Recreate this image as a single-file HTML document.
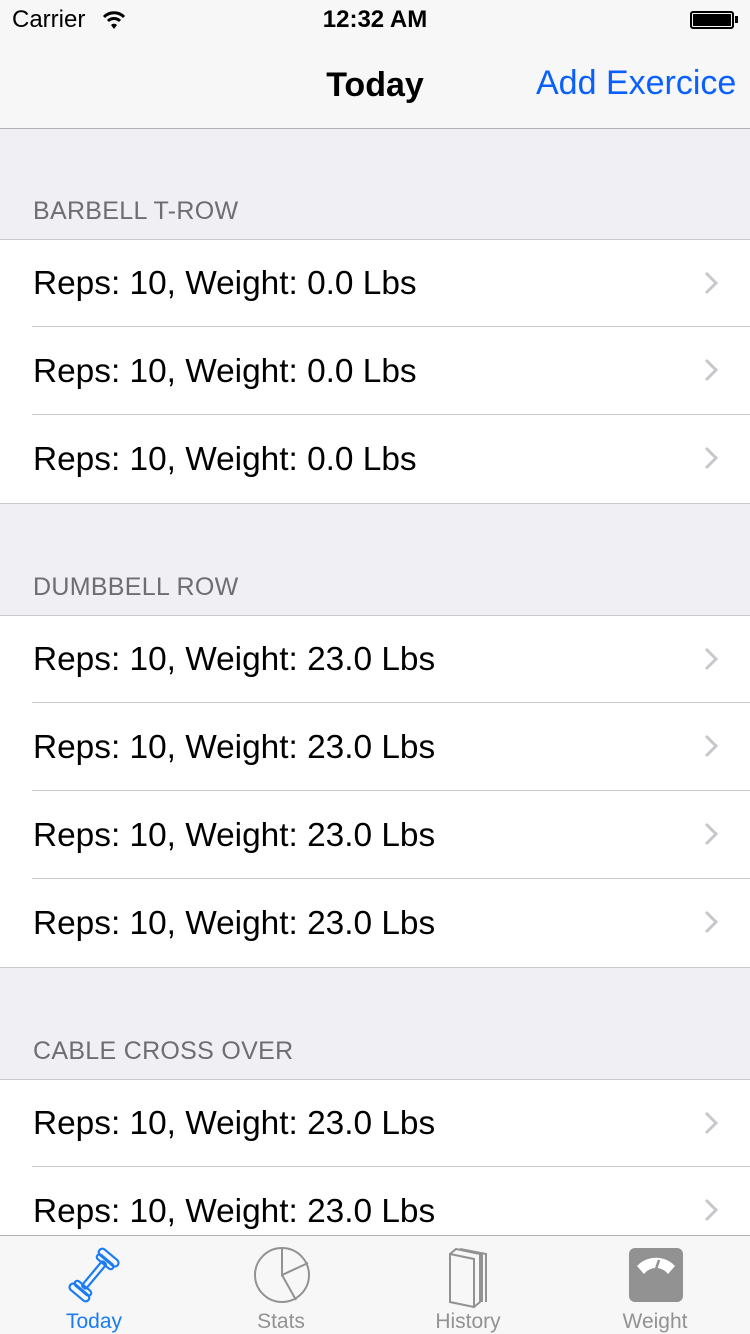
<!DOCTYPE html>
<html><head><meta charset="utf-8"><style>
*{margin:0;padding:0;box-sizing:border-box}
body{width:750px;height:1334px;overflow:hidden;background:#efeff4;font-family:"Liberation Sans",Arial,sans-serif;position:relative}
.a{position:absolute}
.nav{left:0;top:0;width:750px;height:129px;background:#f7f7f7;border-bottom:1px solid #b2b2b2}
.hdr{left:33px;font-size:25px;color:#6d6d72;letter-spacing:0.3px}
.sec{left:0;width:750px;background:#fff;border-top:1px solid #c8c7cc;border-bottom:1px solid #c8c7cc}
.row{position:relative;height:88px;font-size:33.4px;color:#000;line-height:89px;padding-left:33px}
.row:first-child{height:87px;line-height:87px}
.row+.row::before{content:"";position:absolute;left:32px;right:0;top:-1px;border-top:1px solid #c8c7cc}
.row svg{position:absolute;right:32px;top:31px}
.tab{left:0;top:1235px;width:750px;height:99px;background:#f7f7f7;border-top:1px solid #b2b2b2}
.tl{position:absolute;top:74px;font-size:21px;color:#929292;width:150px;text-align:center}
</style></head><body>
<div class="a nav"></div>
<div class="a" style="left:12px;top:6px;font-size:24px">Carrier</div>
<svg class="a" style="left:102px;top:10px" width="24" height="20" viewBox="0 0 24 20"><path d="M2 7a14 14 0 0 1 20 0" stroke="#000" stroke-width="3" fill="none"/><path d="M6 11a8.5 8.5 0 0 1 12 0" stroke="#000" stroke-width="3" fill="none"/><path d="M12 19l-3-4a4 4 0 0 1 6 0z" fill="#000"/></svg>
<div class="a" style="left:0;width:750px;text-align:center;top:6px;font-size:24px;font-weight:bold">12:32 AM</div>
<div class="a" style="left:690px;top:11px;width:44px;height:18px;border:2px solid #000;border-radius:3px;padding:1px"><div style="background:#000;width:100%;height:100%"></div></div>
<div class="a" style="left:735px;top:16px;width:3px;height:7px;background:#000"></div>
<div class="a" style="left:0;width:750px;text-align:center;top:66px;font-size:34px;font-weight:bold">Today</div>
<div class="a" style="left:536px;top:64px;font-size:34px;color:#0a60fe">Add Exercice</div>

<div class="a hdr" style="top:197px">BARBELL T-ROW</div>
<div class="a sec" style="top:239px">
<div class="row">Reps: 10, Weight: 0.0 Lbs<svg width="14" height="24"><path d="M2 2l10 10-10 10" stroke="#c7c7cc" stroke-width="3" fill="none"/></svg></div>
<div class="row">Reps: 10, Weight: 0.0 Lbs<svg width="14" height="24"><path d="M2 2l10 10-10 10" stroke="#c7c7cc" stroke-width="3" fill="none"/></svg></div>
<div class="row">Reps: 10, Weight: 0.0 Lbs<svg width="14" height="24"><path d="M2 2l10 10-10 10" stroke="#c7c7cc" stroke-width="3" fill="none"/></svg></div>
</div>
<div class="a hdr" style="top:573px">DUMBBELL ROW</div>
<div class="a sec" style="top:615px">
<div class="row">Reps: 10, Weight: 23.0 Lbs<svg width="14" height="24"><path d="M2 2l10 10-10 10" stroke="#c7c7cc" stroke-width="3" fill="none"/></svg></div>
<div class="row">Reps: 10, Weight: 23.0 Lbs<svg width="14" height="24"><path d="M2 2l10 10-10 10" stroke="#c7c7cc" stroke-width="3" fill="none"/></svg></div>
<div class="row">Reps: 10, Weight: 23.0 Lbs<svg width="14" height="24"><path d="M2 2l10 10-10 10" stroke="#c7c7cc" stroke-width="3" fill="none"/></svg></div>
<div class="row">Reps: 10, Weight: 23.0 Lbs<svg width="14" height="24"><path d="M2 2l10 10-10 10" stroke="#c7c7cc" stroke-width="3" fill="none"/></svg></div>
</div>
<div class="a hdr" style="top:1037px">CABLE CROSS OVER</div>
<div class="a sec" style="top:1079px">
<div class="row">Reps: 10, Weight: 23.0 Lbs<svg width="14" height="24"><path d="M2 2l10 10-10 10" stroke="#c7c7cc" stroke-width="3" fill="none"/></svg></div>
<div class="row">Reps: 10, Weight: 23.0 Lbs<svg width="14" height="24"><path d="M2 2l10 10-10 10" stroke="#c7c7cc" stroke-width="3" fill="none"/></svg></div>
</div>

<div class="a tab">
<svg class="a" style="left:62px;top:9px" width="64" height="60" viewBox="0 0 68 66" fill="none" stroke="#1a7cf5" stroke-width="2.4">
<g transform="rotate(-50 34 33)"><rect x="16" y="30" width="36" height="6" rx="2"/><rect x="5" y="20" width="8" height="26" rx="4"/><rect x="12" y="22" width="6" height="22" rx="3"/><rect x="50" y="22" width="6" height="22" rx="3"/><rect x="55" y="20" width="8" height="26" rx="4"/></g></svg>
<div class="tl" style="left:19px;color:#1a7cf5">Today</div>
<svg class="a" style="left:253px;top:10px" width="58" height="58" viewBox="0 0 58 58" fill="none" stroke="#929292" stroke-width="2"><ellipse cx="29" cy="29" rx="27" ry="27"/><path d="M29 2v27l26-12M29 29l14 25"/></svg>
<div class="tl" style="left:206px">Stats</div>
<svg class="a" style="left:446px;top:10px" width="46" height="62" viewBox="0 0 46 62" fill="none" stroke="#929292" stroke-width="2"><path d="M4 8l24 5v48L4 56z"/><path d="M4 8l6-5 24 5v48l-6 5M10 3l26 5v48M14 3l26 5v48"/></svg>
<div class="tl" style="left:393px">History</div>
<svg class="a" style="left:629px;top:12px" width="54" height="54" viewBox="0 0 54 54"><rect x="0" y="0" width="54" height="54" rx="6" fill="#929292"/><path d="M8 18a26 26 0 0 1 38 0l-7 8a15 15 0 0 0-24 0z" fill="#fff"/><path d="M30 12l-3 9" stroke="#929292" stroke-width="2.5"/></svg>
<div class="tl" style="left:580px">Weight</div>
</div>
</body></html>
